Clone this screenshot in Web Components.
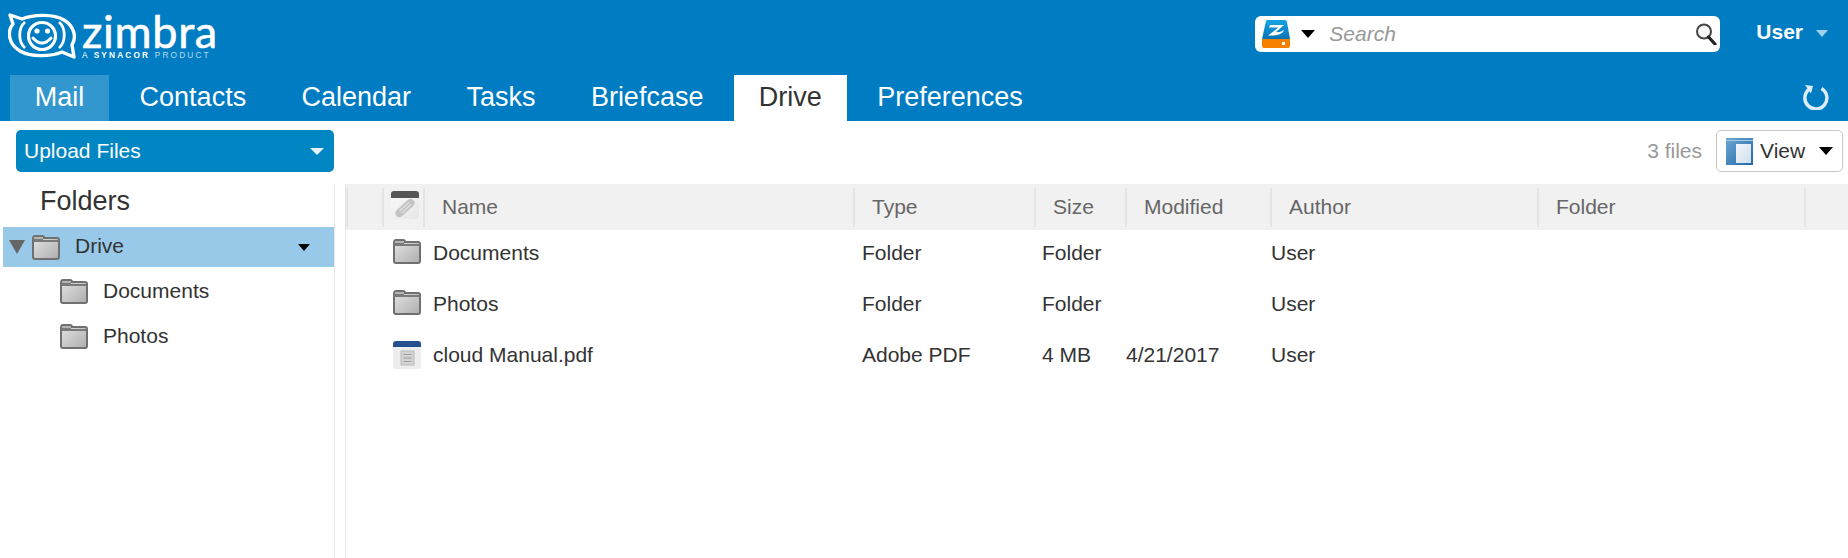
<!DOCTYPE html>
<html>
<head>
<meta charset="utf-8">
<title>Zimbra Drive</title>
<style>
html, body { margin: 0; height: 100%; background: #fff; overflow: hidden; }
body { font-family: "Liberation Sans", Arial, sans-serif; color: #333; }
</style>
</head>
<body>
<zm-app></zm-app>

<script>
// all the little pictures of the page, by name
const icons = {
    folder: `<svg width="28" height="25" viewBox="0 0 28 25">
        <defs><linearGradient id="f" x1="0" y1="0" x2="1" y2="1"><stop offset="0" stop-color="#e4e4e4"/><stop offset="1" stop-color="#aeaeae"/></linearGradient></defs>
        <path d="M1 4 Q1 1 3 1 H10 Q12 1 12 3 H25 Q27 3 27 5 V22 Q27 24 25 24 H3 Q1 24 1 22 Z" fill="url(#f)" stroke="#707070" stroke-width="2"/>
        <path d="M1.5 3.5 H11 V5 H26.5 V7 H1.5 Z" fill="#7a7a7a"/>
        <path d="M2.5 2 H10 V4 H2.5 Z" fill="#b4b4b4"/>
    </svg>`,
    drive: `<svg width="28" height="28" viewBox="0 0 28 28">
        <defs><linearGradient id="d" x1="0" y1="0" x2="0" y2="1"><stop offset="0" stop-color="#12a5e6"/><stop offset="1" stop-color="#0672b4"/></linearGradient></defs>
        <path d="M4 1 Q4.300 0 6 0 H23 Q24.500 0 25 2 L28 19 H0 Z" fill="url(#d)"/>
        <path d="M8 5 H22 L14 12 C17 12.500 20 11.500 22 10 C21 14 15 16 6 15.500 L16.500 7.500 H7 Z" fill="#fff"/>
        <path d="M0 19 H28 V26 Q28 28 26 28 H2 Q0 28 0 26 Z" fill="#f77f00"/>
        <rect x="20" y="22" width="3" height="3" fill="#fff"/>
    </svg>`,
    search: `<svg width="22" height="22" viewBox="0 0 22 22">
        <circle cx="9" cy="8.500" r="7" fill="#f6f6f6" stroke="#444" stroke-width="2"/>
        <path d="M13.500 14 L20 21" stroke="#222" stroke-width="3.200" stroke-linecap="round"/>
    </svg>`,
    refresh: `<svg width="26" height="26" viewBox="0 0 26 26">
        <path d="M18.500 4.500 A11 11 0 1 1 6.500 5" fill="none" stroke="#dcedf8" stroke-width="3.400"/>
        <path d="M2 1 L10 2 L8 9.500 Z" fill="#dcedf8"/>
    </svg>`,
    view: `<svg width="27" height="27" viewBox="0 0 27 27">
        <defs>
            <linearGradient id="v" x1="0" y1="0" x2="1" y2="1"><stop offset="0" stop-color="#6ea6d2"/><stop offset="1" stop-color="#1f69a8"/></linearGradient>
            <linearGradient id="p" x1="0" y1="0" x2="1" y2="1"><stop offset="0" stop-color="#f2f6fa"/><stop offset="1" stop-color="#cfdfec"/></linearGradient>
        </defs>
        <rect width="27" height="27" fill="url(#v)"/>
        <rect x="0" y="2" width="27" height="1" fill="#a5cbe6"/>
        <rect x="10" y="6" width="15" height="19" fill="url(#p)"/>
    </svg>`,
    clip: `<svg width="28" height="28" viewBox="0 0 28 28">
        <defs><linearGradient id="c" x1="0" y1="0" x2="1" y2="1"><stop offset="0" stop-color="#fafafa"/><stop offset="1" stop-color="#e6e6e6"/></linearGradient></defs>
        <rect width="28" height="28" rx="3" fill="url(#c)"/>
        <path d="M0 7 V3 Q0 0 3 0 H25 Q28 0 28 3 V7 Z" fill="#555"/>
        <path d="M8.500 22 L19.500 12" stroke="#c4c4c4" stroke-width="8" stroke-linecap="round"/>
        <path d="M8.500 20 L18 11.500 M10.500 22 L20 13.500" stroke="#e2e2e2" stroke-width="1.200"/>
    </svg>`,
    pdf: `<svg width="28" height="28" viewBox="0 0 28 28">
        <rect width="28" height="28" rx="3" fill="#ededed"/>
        <path d="M0 6 V3 Q0 0 3 0 H25 Q28 0 28 3 V6 Z" fill="#24508f"/>
        <rect x="8" y="10" width="13" height="14" fill="#d4d4d4" stroke="#bbb"/>
        <path d="M10.500 13.500 H18.500 M10.500 17 H18.500 M10.500 20.500 H18.500" stroke="#999" stroke-width="1.200"/>
    </svg>`,
    logo: `<svg width="70" height="46" viewBox="0 0 70 46">
        <path d="M2 2 L14 6 C26 1 46 1 56 7 C66 13 69 24 64 32 L66 44 L54 39 C42 44 22 44 12 38 C0 31 -1 18 5 11 Z" fill="none" stroke="#fff" stroke-width="3.400" stroke-linejoin="round"/>
        <path d="M17 9 C10 15 10 29 17 35 M51 9 C58 15 58 29 51 35" fill="none" stroke="#fff" stroke-width="2.800"/>
        <circle cx="34" cy="23" r="13.500" fill="none" stroke="#fff" stroke-width="3.200"/>
        <circle cx="29" cy="18" r="2.600" fill="#fff"/><circle cx="39.500" cy="18" r="2.600" fill="#fff"/>
        <path d="M25 25 Q34 35 43 25" fill="none" stroke="#fff" stroke-width="3" stroke-linecap="round"/>
    </svg>`
};

class ZmIcon extends HTMLElement {
    connectedCallback() {
        this.attachShadow({ mode: "open" });
        // gradient ids must stay in this shadow root, so no clash between the folders
        this.shadowRoot.innerHTML = `<style>:host { display: block; line-height: 0; flex: none; }</style>${icons[this.getAttribute("name")]}`;
    }
}

class ZmCaret extends HTMLElement {
    connectedCallback() {
        this.attachShadow({ mode: "open" });
        this.shadowRoot.innerHTML = `<style>
        :host {
            display: block; flex: none; width: 0; height: 0;
            border-left: var(--w, 7px) solid transparent;
            border-right: var(--w, 7px) solid transparent;
            border-top: var(--h, 8px) solid var(--c, #000);
        }
        </style>`;
    }
}

class ZmLogo extends HTMLElement {
    connectedCallback() {
        this.attachShadow({ mode: "open" });
        this.shadowRoot.innerHTML = `<style>
        :host { display: flex; gap: 4px; padding: 13px 0 0 8px; color: #fff; }
        .words { display: flex; flex-direction: column; }
        .name { font: 400 45px/36px Lato, sans-serif; letter-spacing: .7px; height: 38px; -webkit-text-stroke: .6px #fff; }
        .sub { font: 400 8.300px/9px "Liberation Sans", sans-serif; letter-spacing: 2.150px; white-space: nowrap; }
        .sub b { font-weight: 700; }
        .sub span { opacity: .7; }
        </style>
        <zm-icon name="logo"></zm-icon>
        <div class="words">
            <div class="name">zimbra</div>
            <div class="sub">A <b>SYNACOR</b> <span>PRODUCT</span></div>
        </div>`;
    }
}

class ZmSearch extends HTMLElement {
    connectedCallback() {
        this.attachShadow({ mode: "open" });
        this.shadowRoot.innerHTML = `<style>
        :host {
            display: flex; align-items: center; width: 465px; height: 36px; box-sizing: border-box;
            background: #fff; border-radius: 6px; padding: 0 3px 0 7px;
        }
        zm-caret { margin: 0 14px 0 11px; }
        .text { flex: 1; font-style: italic; font-size: 21px; color: #999; }
        </style>
        <zm-icon name="drive"></zm-icon>
        <zm-caret></zm-caret>
        <span class="text">Search</span>
        <zm-icon name="search"></zm-icon>`;
    }
}

class ZmHeader extends HTMLElement {
    connectedCallback() {
        this.attachShadow({ mode: "open" });
        this.shadowRoot.innerHTML = `<style>
        :host { display: flex; height: 75px; background: #007cc3; }
        zm-search { margin: 16px 0 0 auto; }
        .user {
            display: flex; align-items: center; gap: 13px; height: 24px; margin: 20px 20px 0 36px;
            color: #fff; font-weight: 700; font-size: 21px;
        }
        .user zm-caret { --w: 6px; --h: 7px; --c: #9fd0ec; margin-top: 3px; }
        </style>
        <zm-logo></zm-logo>
        <zm-search></zm-search>
        <div class="user">User<zm-caret></zm-caret></div>`;
    }
}

class ZmTabs extends HTMLElement {
    connectedCallback() {
        const names = ["Mail", "Contacts", "Calendar", "Tasks", "Briefcase", "Drive", "Preferences"];
        const selected = this.getAttribute("selected");
        const hover = this.getAttribute("hover");
        let tabs = names.map((n) => {
            let cls = n == selected ? "on" : (n == hover ? "over" : "");
            return `<div class="tab ${cls}">${n}</div>`;
        }).join("");
        this.attachShadow({ mode: "open" });
        this.shadowRoot.innerHTML = `<style>
        :host { display: flex; align-items: flex-end; gap: 6px; height: 46px; padding: 0 19px 0 10px; background: #007cc3; }
        .tab { height: 46px; line-height: 44px; padding: 0 24.700px; font-size: 27px; color: #fff; }
        .over { background: #3397cf; }
        .on { background: #fff; color: #333; }
        zm-icon { margin: 0 0 11px auto; }
        </style>${tabs}<zm-icon name="refresh"></zm-icon>`;
    }
}

class ZmToolbar extends HTMLElement {
    connectedCallback() {
        this.attachShadow({ mode: "open" });
        this.shadowRoot.innerHTML = `<style>
        :host { display: flex; align-items: center; height: 42px; padding: 9px 5px 12px 16px; font-size: 21px; }
        .upload {
            display: flex; align-items: center; justify-content: space-between; box-sizing: border-box;
            width: 318px; height: 42px; padding: 0 10px 0 8px; border-radius: 5px; background: #0087c3; color: #fff;
        }
        .upload zm-caret { --c: #e4f2fa; --h: 7px; }
        .count { margin-left: auto; color: #999; }
        .view {
            display: flex; align-items: center; box-sizing: border-box; width: 127px; height: 42px; margin-left: 14px;
            padding: 0 9px; border: 1px solid #c8c8c8; border-radius: 5px; color: #333;
        }
        .view span { margin: 0 auto 0 7px; }
        </style>
        <div class="upload">Upload Files<zm-caret></zm-caret></div>
        <span class="count">3 files</span>
        <div class="view"><zm-icon name="view"></zm-icon><span>View</span><zm-caret></zm-caret></div>`;
    }
}

class ZmTree extends HTMLElement {
    connectedCallback() {
        this.attachShadow({ mode: "open" });
        this.shadowRoot.innerHTML = `<style>
        :host { display: block; box-sizing: border-box; width: 335px; padding-left: 3px; border-right: 1px solid #e6e6e6; font-size: 21px; }
        h2 { margin: 0; height: 43px; line-height: 34px; padding-left: 37px; font-size: 27px; font-weight: 400; }
        .row { display: flex; align-items: center; }
        .root { height: 40px; background: #99c9e8; padding: 0 24px 0 6px; }
        .root .arrow { --w: 8px; --h: 14px; --c: #666; margin-right: 7px; }
        .root span { margin: 0 auto 0 15px; padding-bottom: 2px; }
        .root .more { --w: 6.500px; --h: 7px; }
        .sub { box-sizing: border-box; height: 45px; padding: 3px 0 0 57px; gap: 15px; }
        </style>
        <h2>Folders</h2>
        <div class="row root">
            <zm-caret class="arrow"></zm-caret><zm-icon name="folder"></zm-icon><span>Drive</span><zm-caret class="more"></zm-caret>
        </div>
        <div class="row sub"><zm-icon name="folder"></zm-icon>Documents</div>
        <div class="row sub"><zm-icon name="folder"></zm-icon>Photos</div>`;
    }
}

// same columns for the header and the rows
const COLS = "36px 41px 430px 181px 91px 145px 267px 267px 1fr";

class ZmListHeader extends HTMLElement {
    connectedCallback() {
        this.attachShadow({ mode: "open" });
        this.shadowRoot.innerHTML = `<style>
        :host {
            display: grid; grid-template-columns: ${COLS}; height: 46px; background: #f1f1f1;
            font-size: 21px; color: #666;
        }
        .c { display: flex; align-items: center; padding: 0 0 1px 17px; margin: 4px 0 3px; border-left: 2px solid #e4e4e4; box-sizing: border-box; }
        .c:first-child { border: 0; }
        .clip { padding: 0 0 6px 7px; }
        </style>
        <div class="c"></div>
        <div class="c clip"><zm-icon name="clip"></zm-icon></div>
        <div class="c">Name</div>
        <div class="c">Type</div>
        <div class="c">Size</div>
        <div class="c">Modified</div>
        <div class="c">Author</div>
        <div class="c">Folder</div>
        <div class="c"></div>`;
    }
}

class ZmFileRow extends HTMLElement {
    connectedCallback() {
        const get = (a) => this.getAttribute(a) || "";
        this.attachShadow({ mode: "open" });
        this.shadowRoot.innerHTML = `<style>
        :host {
            display: grid; grid-template-columns: ${COLS}; align-items: center; box-sizing: border-box;
            height: 51px; padding-bottom: 5px; font-size: 21px; color: #333; white-space: nowrap;
        }
        .name { grid-column: 2 / 4; display: flex; align-items: center; gap: 12px; padding-left: 11px; }
        zm-icon[name="folder"] { margin-bottom: 3px; }
        .type { padding-left: 9px; }
        .size { padding-left: 8px; }
        .pad { padding-left: 1px; }
        </style>
        <div></div>
        <div class="name"><zm-icon name="${get("icon")}"></zm-icon>${get("name")}</div>
        <div class="type">${get("type")}</div>
        <div class="size">${get("size")}</div>
        <div class="pad">${get("modified")}</div>
        <div class="pad">${get("author")}</div>`;
    }
}

class ZmList extends HTMLElement {
    connectedCallback() {
        this.attachShadow({ mode: "open" });
        this.shadowRoot.innerHTML = `<style>
        :host { display: block; flex: 1; margin-left: 10px; border-left: 1px solid #e6e6e6; }
        </style>
        <zm-list-header></zm-list-header>
        <slot></slot>`;
    }
}

class ZmApp extends HTMLElement {
    connectedCallback() {
        this.attachShadow({ mode: "open" });
        this.shadowRoot.innerHTML = `<style>
        :host { display: flex; flex-direction: column; height: 558px; }
        .main { display: flex; flex: 1; margin-top: 0; }
        </style>
        <zm-header></zm-header>
        <zm-tabs selected="Drive" hover="Mail"></zm-tabs>
        <zm-toolbar></zm-toolbar>
        <div class="main">
            <zm-tree></zm-tree>
            <zm-list>
                <zm-file-row icon="folder" name="Documents" type="Folder" size="Folder" author="User"></zm-file-row>
                <zm-file-row icon="folder" name="Photos" type="Folder" size="Folder" author="User"></zm-file-row>
                <zm-file-row icon="pdf" name="cloud Manual.pdf" type="Adobe PDF" size="4 MB" modified="4/21/2017" author="User"></zm-file-row>
            </zm-list>
        </div>`;
    }
}

customElements.define("zm-icon", ZmIcon);
customElements.define("zm-caret", ZmCaret);
customElements.define("zm-logo", ZmLogo);
customElements.define("zm-search", ZmSearch);
customElements.define("zm-header", ZmHeader);
customElements.define("zm-tabs", ZmTabs);
customElements.define("zm-toolbar", ZmToolbar);
customElements.define("zm-tree", ZmTree);
customElements.define("zm-list-header", ZmListHeader);
customElements.define("zm-file-row", ZmFileRow);
customElements.define("zm-list", ZmList);
customElements.define("zm-app", ZmApp);
</script>
</body>
</html>
